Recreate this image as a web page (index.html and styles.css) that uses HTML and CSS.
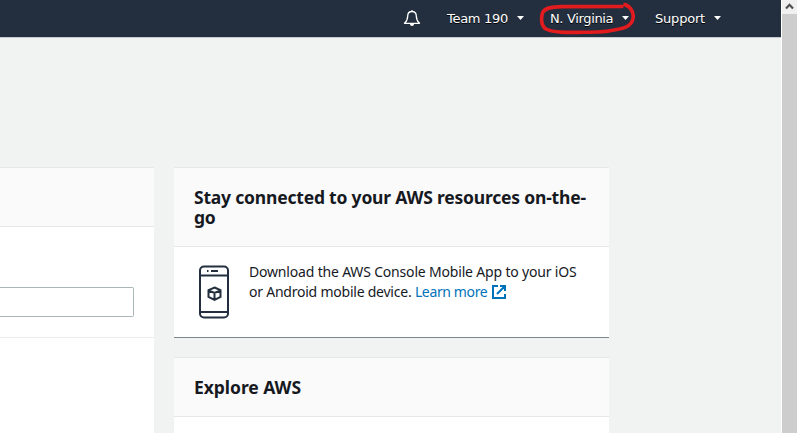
FILE: index.html
```html
<!DOCTYPE html>
<html lang="en">
<head>
<meta charset="utf-8">
<title>AWS Management Console</title>
<link rel="stylesheet" href="styles.css">
</head>
<body>
<div class="window">
  <div class="page">
    <header class="nav">
      <svg class="bell" width="18" height="18" viewBox="0 0 18 18" fill="none" stroke="#fff" stroke-width="1.3" stroke-linejoin="round"><path d="M9 1v1.500M9 2.500C6.200 2.500 4.700 4.400 4.700 7c0 3.800-1 5.300-3.200 7.300h15c-2.200-2-3.200-3.500-3.200-7.300C13.300 4.400 11.800 2.500 9 2.500Z"/><path d="M7 15h4c0 1.200-.8 2-2 2s-2-.8-2-2Z" fill="#fff" stroke="none"/></svg>
      <span class="item team">Team 190</span><i class="caret"></i>
      <span class="item region">N. Virginia</span><i class="caret"></i>
      <span class="item support">Support</span><i class="caret"></i>
      <svg class="mark" width="100" height="36" viewBox="0 0 100 36" fill="none" stroke="#e21b1f" stroke-width="3.600" stroke-linecap="round" stroke-linejoin="round"><path d="M84 6.500C65 6.500 45 6.500 24 6.600C13 6.700 5.500 8 4.200 14C3 20 3 26 8 29C16 33 30 32.500 45 32.300C60 32 66 32.300 73 30.500C82 29 91 28 94 21.500C97.500 14 93 7 87 4.500"/></svg>
    </header>
    <main class="content">
      <section class="card services">
        <div class="card-head"></div>
        <div class="search-area"><div class="search"></div></div>
      </section>
      <div class="column">
        <section class="card mobile">
          <div class="card-head"><h2>Stay connected to your AWS resources on-the-<br>go</h2></div>
          <div class="card-body">
            <svg class="phone" width="32" height="54" viewBox="0 0 32 54" fill="none" stroke="#232f3e" stroke-width="2"><rect x="2" y="1.500" width="28" height="51" rx="4"/><path d="M2 10.500h28M2 47h28M13 6h7M9 6h1.500"/><path d="M16.500 22.500l6 2.700v6.800l-6 3-6-3v-6.800ZM10.500 25.500l6 2.500 6-2.500M16.500 28v6.500"/></svg>
            <p>Download the AWS Console Mobile App to your iOS<br><span class="line-two">or Android mobile device.</span> <a>Learn more</a><svg class="external" width="14" height="14" viewBox="0 0 14 14" fill="none" stroke="#0073bb" stroke-width="2"><path d="M6 1H1v12h12V9M8 1h5v5M13 1L5 9"/></svg></p>
          </div>
        </section>
        <section class="card explore">
          <div class="card-head"><h2>Explore AWS</h2></div>
        </section>
      </div>
    </main>
  </div>
  <div class="scrollbar">
    <div class="scroll-button"><svg width="15" height="14" viewBox="0 0 15 14" fill="none" stroke="#505050" stroke-width="2.200"><path d="M4 8.500l3.500-3.700L11 8.500"/></svg></div>
    <div class="thumb"></div>
  </div>
</div>
</body>
</html>
```

FILE: styles.css
```css
* { box-sizing: border-box; }
body { margin: 0; background: #f1f3f3; font-family: "Noto Sans", sans-serif; color: #16191f; }
.window { display: flex; width: 798px; height: 433px; overflow: hidden; }
.page { width: 781px; }
.nav { position: relative; display: flex; align-items: center; height: 38px; padding: 0 58px 1px 403px; background: #232f3e; border-bottom: 1px solid #c5cacc; color: #fff; font: 13px/18px "DejaVu Sans", sans-serif; text-shadow: 0 1px 0 #000; }
.bell { flex: none; }
.item { flex: none; white-space: nowrap; padding-top: 1px; }
.team { width: 62px; margin-left: 26px; letter-spacing: -.3px; }
.region { width: 64px; margin-left: 26px; letter-spacing: -.35px; }
.support { width: 51px; margin-left: 26px; letter-spacing: -.2px; }
.caret { flex: none; width: 7px; height: 4px; margin-left: 8px; background: #fff; clip-path: polygon(0 0, 100% 0, 50% 100%); }
.mark { position: absolute; left: 538px; top: 0; }
.content { display: flex; gap: 20px; padding-top: 129px; }
.card { background: #fff; border-top: 1px solid #e4e8e8; }
.card-head { background: #fafafa; border-bottom: 1px solid #e4e8e8; }
.services { width: 154px; height: 266px; }
.services .card-head { height: 59px; }
.search-area { height: 111px; padding-top: 60px; border-bottom: 1px solid #eaeded; }
.search { width: 134px; height: 30px; border: 1px solid #aab7b8; border-left: 0; border-radius: 0 2px 2px 0; }
.column { width: 435px; }
.mobile { height: 171px; border-bottom: 1px solid #7b878b; }
.mobile .card-head { height: 79px; }
.column .card-head { padding: 19px 20px 0; }
h2 { margin: 0; font-size: 17.5px; line-height: 20px; font-weight: 700; white-space: nowrap; letter-spacing: -.2px; }
.explore h2 { letter-spacing: -.05px; }
.card-body { display: flex; padding: 18px 20px 0 24px; }
.phone { flex: none; }
p { margin: -3px 0 0 19px; font-size: 14px; line-height: 20px; white-space: nowrap; letter-spacing: -.18px; }
.line-two { letter-spacing: -.23px; }
a { color: #0073bb; letter-spacing: -.37px; }
.external { margin-left: 5px; vertical-align: -2px; }
.explore { height: 80px; margin-top: 19px; }
.explore .card-head { height: 59px; }
.scrollbar { width: 17px; padding-left: 1px; background: #fff; }
.scroll-button { width: 15px; height: 14px; background: #f0f0f0; }
.scroll-button svg { display: block; }
.thumb { width: 15px; height: 419px; background: #cdcdcd; }
```
